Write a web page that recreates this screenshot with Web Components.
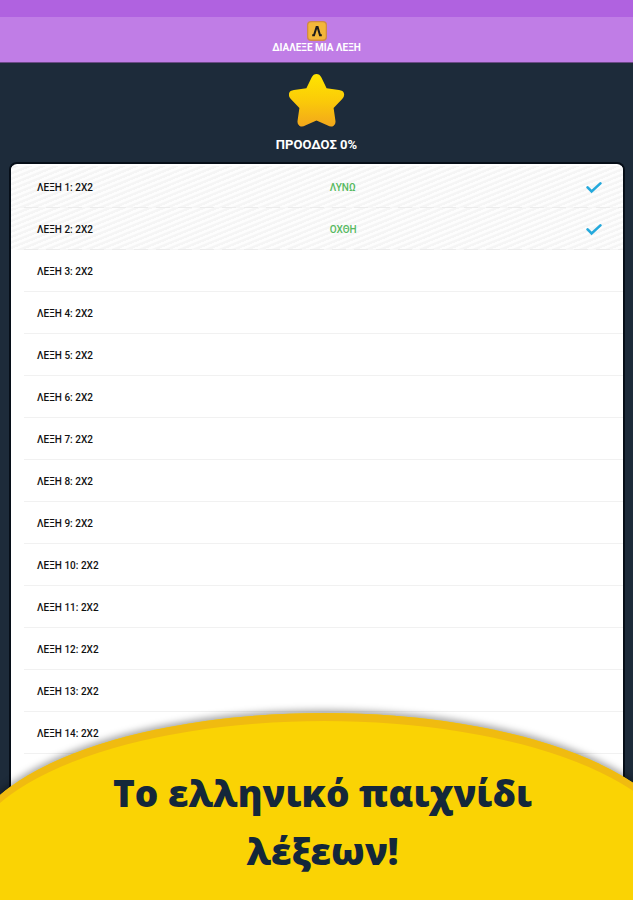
<!DOCTYPE html>
<html lang="el">
<head>
<meta charset="utf-8">
<meta name="viewport" content="width=device-width, initial-scale=1">
<title>Διάλεξε μια λέξη</title>
<style>
    body {
        margin: 0;
        background: #1d2b3a;
        font-family: Roboto, "Liberation Sans", sans-serif;
    }
</style>
</head>
<body>
<word-app>
    <app-header slot="header">ΔΙΑΛΕΞΕ ΜΙΑ ΛΕΞΗ</app-header>
    <level-progress slot="progress">ΠΡΟΟΔΟΣ 0%</level-progress>
    <word-list>
        <word-row solved>ΛΕΞΗ 1: 2X2<span slot="answer">ΛΥΝΩ</span></word-row>
        <word-row solved>ΛΕΞΗ 2: 2X2<span slot="answer">ΟΧΘΗ</span></word-row>
        <word-row>ΛΕΞΗ 3: 2X2</word-row>
        <word-row>ΛΕΞΗ 4: 2X2</word-row>
        <word-row>ΛΕΞΗ 5: 2X2</word-row>
        <word-row>ΛΕΞΗ 6: 2X2</word-row>
        <word-row>ΛΕΞΗ 7: 2X2</word-row>
        <word-row>ΛΕΞΗ 8: 2X2</word-row>
        <word-row>ΛΕΞΗ 9: 2X2</word-row>
        <word-row>ΛΕΞΗ 10: 2X2</word-row>
        <word-row>ΛΕΞΗ 11: 2X2</word-row>
        <word-row>ΛΕΞΗ 12: 2X2</word-row>
        <word-row>ΛΕΞΗ 13: 2X2</word-row>
        <word-row>ΛΕΞΗ 14: 2X2</word-row>
    </word-list>
    <promo-banner slot="banner">Το ελληνικό παιχνίδι λέξεων!</promo-banner>
</word-app>

<script>
function define(name, html, setup) {
    const template = document.createElement("template");
    template.innerHTML = html;

    customElements.define(name, class extends HTMLElement {
        constructor() {
            super();
            const shadow = this.attachShadow({ mode: "open" });
            shadow.append(template.content.cloneNode(true));
        }

        connectedCallback() {
            if (setup) setup(this);
        }
    });
}

define("word-app", `
    <style>
        :host {
            display: flex;
            flex-direction: column;
            position: relative;
            height: 100vh;
            overflow: hidden;
        }
        main {
            flex: 1;
            min-height: 0;
            display: flex;
            padding: 0 10px 0 11px;
        }
        .banner {
            position: absolute;
            left: 0;
            right: 0;
            bottom: 0;
        }
    </style>
    <slot name="header"></slot>
    <slot name="progress"></slot>
    <main><slot></slot></main>
    <div class="banner"><slot name="banner"></slot></div>
`);

define("app-header", `
    <style>
        :host {
            display: block;
            background: #c07de6;
            color: white;
            border-bottom: 1px solid #6b4a86;
        }
        .status { height: 17px; background: #b062e0; }
        .bar {
            display: flex;
            flex-direction: column;
            align-items: center;
            padding: 4px 0 8px;
        }
        svg { width: 20px; height: 20px; display: block; }
        h1 {
            margin: 0;
            font-size: 10px;
            line-height: 13px;
            font-weight: 700;
        }
    </style>
    <div class="status"></div>
    <div class="bar">
        <svg viewBox="0 0 20 20" aria-hidden="true">
            <rect x="0" y="0" width="20" height="20" rx="4" fill="#d08a45"/>
            <rect x="1.3" y="1.3" width="17.4" height="17.2" rx="3" fill="#f3b63a"/>
            <path d="M5.2 14.3 H7 L9.6 5.9 H10.6 L13 14.3 H14.8" fill="none" stroke="#1c1a1c" stroke-width="2"/>
        </svg>
        <h1><slot></slot></h1>
    </div>
`);

define("level-progress", `
    <style>
        :host {
            display: flex;
            flex-direction: column;
            align-items: center;
            padding: 11px 0;
            color: white;
            font-size: 13px;
            line-height: 16px;
            font-weight: 700;
        }
        svg { width: 56px; height: 54px; display: block; margin-bottom: 9px; }
    </style>
    <svg viewBox="0 0 56 54" aria-hidden="true">
        <defs>
            <linearGradient id="gold" x1="0" y1="0" x2="0" y2="1">
                <stop offset="0" stop-color="#ffe500"/>
                <stop offset="0.5" stop-color="#fbcb08"/>
                <stop offset="1" stop-color="#f2a71c"/>
            </linearGradient>
        </defs>
        <path fill="url(#gold)" d="M22.6 3.4 Q24.4 0 27.5 0 Q30.6 0 32.4 3.4 L37.6 14.2 L50 16 Q54.2 16.5 55 19.4 Q55.7 22.3 53.2 25 L44.6 34 L46.4 46.6 Q47 50.4 44.4 52 Q41.8 53.4 38.8 51.6 L27.5 46.4 L16.2 51.6 Q13.2 53.4 10.6 52 Q8 50.4 8.6 46.6 L10.4 34 L1.8 25 Q-0.7 22.3 0 19.4 Q0.8 16.5 5 16 L17.4 14.2 Z"/>
    </svg>
    <slot></slot>
`);

define("word-list", `
    <style>
        :host {
            display: block;
            flex: 1;
            padding-top: 2px;
            overflow: hidden;
            background: white;
            border-radius: 6px 6px 0 0;
            box-shadow: 0 0 0 2px #060e18;
        }
    </style>
    <slot></slot>
`, el => el.setAttribute("role", "list"));

define("word-row", `
    <style>
        :host {
            display: grid;
            grid-template-columns: 8fr 7fr 16px;
            align-items: center;
            height: 42px;
            padding: 1px 21px 0 26px;
            color: #111;
            font-size: 10px;
            line-height: 13px;
            font-weight: 500;
            /* divider starts a little inside the card */
            background: linear-gradient(#f1f1f1, #f1f1f1) 13px 100% / 100% 1px no-repeat;
            box-sizing: border-box;
        }
        :host([solved]) {
            background:
                repeating-linear-gradient(90deg, #ececec 0 14px, #f6f6f6 14px 22px) 13px 100% / 100% 1px no-repeat,
                repeating-linear-gradient(-22deg, #f5f5f5 0 2px, #fdfdfd 3px 5px);
        }
        :host(:not([solved])) svg { display: none; }
        ::slotted([slot="answer"]) { color: #56b960; }
        svg { width: 16px; height: 12px; display: block; }
    </style>
    <span><slot></slot></span>
    <slot name="answer"></slot>
    <svg viewBox="0 0 16 12" aria-hidden="true">
        <path d="M1.6 5.4 L5.6 9.4 L14.4 1.4" fill="none" stroke="#24a9dc" stroke-width="2.6" stroke-linecap="round"/>
    </svg>
`, el => el.setAttribute("role", "listitem"));

define("promo-banner", `
    <style>
        :host {
            display: block;
            /* wider than the page, so the sides of the dome are cut off */
            margin: 0 -48px 0 -32px;
            padding: 51px 44px 20px 40px;
            background: #fad304;
            border-radius: 50% 50% 0 0 / 140px 140px 0 0;
            box-shadow: inset 0 8px 0 #f0bb10, 0 -3px 7px rgba(0, 0, 0, 0.35);
            color: #14273a;
        }
        p {
            max-width: 440px;
            margin: 0 auto;
            text-align: center;
            font-family: "Open Sans", "Noto Sans", sans-serif;
            font-size: 37px;
            line-height: 58px;
            font-weight: 800;
        }
    </style>
    <p><slot></slot></p>
`);
</script>
</body>
</html>
